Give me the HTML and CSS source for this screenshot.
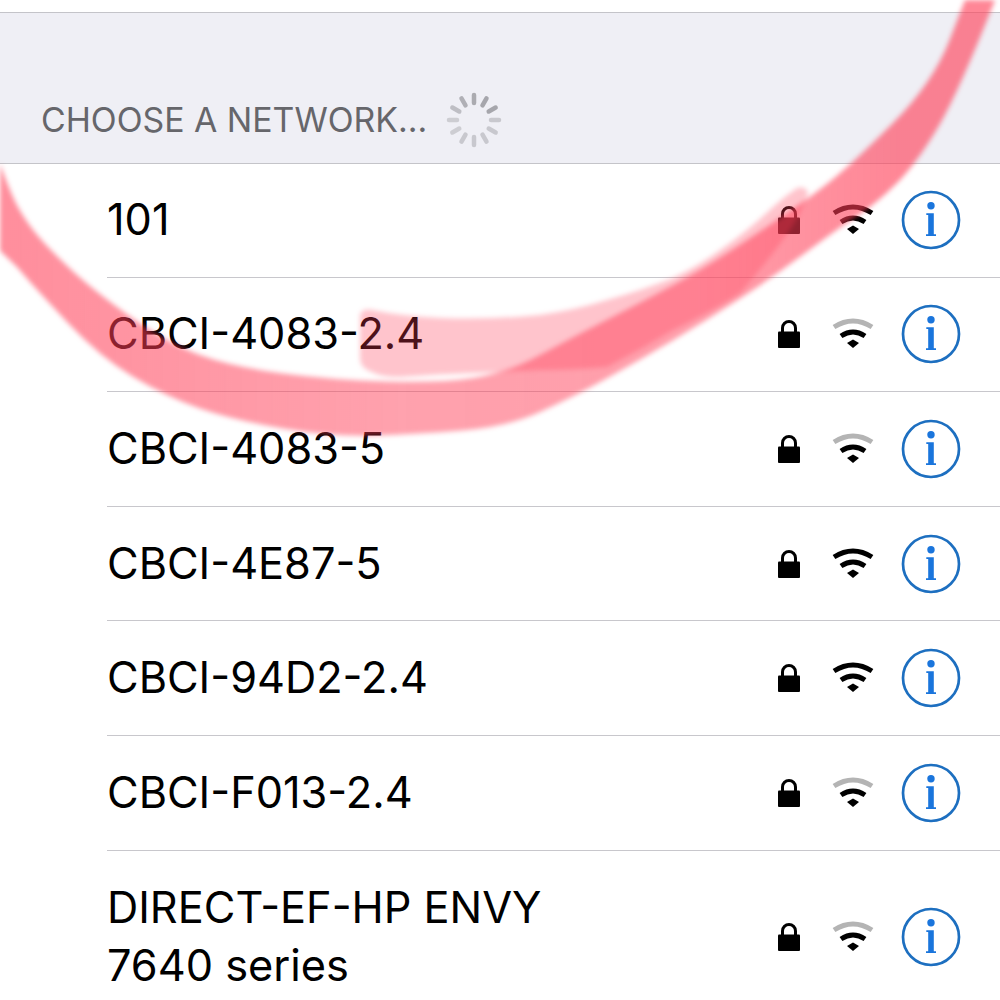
FILE: index.html
```html
<!DOCTYPE html>
<html lang="en">
<head>
<meta charset="utf-8">
<title>Wi-Fi networks</title>
<link rel="stylesheet" href="styles.css">
</head>
<body>
<svg class="defs" width="0" height="0" aria-hidden="true">
  <symbol id="lock" viewBox="0 0 24 30">
    <path class="lock-shackle" d="M5.500 14V9a6.500 6.500 0 0 1 13 0v5"/>
    <rect x="1" y="12.500" width="22" height="16.500" rx="1"/>
  </symbol>
  <symbol id="info" viewBox="0 0 60 60">
    <circle class="info-ring" cx="30" cy="30" r="28"/>
    <circle class="info-mark" cx="30" cy="15.800" r="3.700"/>
    <path class="info-mark" d="M25.300 23.300H32.800V44.300H35V46H25V44.300H27.200V25H25.300Z"/>
  </symbol>
</svg>
<main class="screen">
  <div class="top-gap"></div>
  <header class="section-head">
    <span class="section-title">CHOOSE A NETWORK...</span>
    <svg class="spinner" width="56" height="56" viewBox="-28 -28 56 56" aria-hidden="true">
      <g stroke="#8e8e93" stroke-width="4.500" stroke-linecap="round">
        <line y1="-25" y2="-17" stroke-opacity=".7"/>
        <line y1="-25" y2="-17" transform="rotate(30)" stroke-opacity=".75"/>
        <line y1="-25" y2="-17" transform="rotate(60)" stroke-opacity=".75"/>
        <line y1="-25" y2="-17" transform="rotate(90)" stroke-opacity=".4"/>
        <line y1="-25" y2="-17" transform="rotate(120)" stroke-opacity=".4"/>
        <line y1="-25" y2="-17" transform="rotate(150)" stroke-opacity=".4"/>
        <line y1="-25" y2="-17" transform="rotate(180)" stroke-opacity=".4"/>
        <line y1="-25" y2="-17" transform="rotate(210)" stroke-opacity=".4"/>
        <line y1="-25" y2="-17" transform="rotate(240)" stroke-opacity=".35"/>
        <line y1="-25" y2="-17" transform="rotate(270)" stroke-opacity=".35"/>
        <line y1="-25" y2="-17" transform="rotate(300)" stroke-opacity=".5"/>
        <line y1="-25" y2="-17" transform="rotate(330)" stroke-opacity=".65"/>
      </g>
    </svg>
  </header>
  <ul class="networks">
    <li class="network">
      <span class="network-name">101</span>
      <svg class="lock" aria-hidden="true"><use href="#lock"/></svg>
      <svg class="wifi" viewBox="0 0 44 32" aria-hidden="true"><path class="arc" d="M3 9Q22 -3 41 9"/><path class="arc" d="M10 18Q22 10 34 18"/><path class="dot" d="M16 25L22 21.500 28 25 22 30Z"/></svg>
      <svg class="info" aria-hidden="true"><use href="#info"/></svg>
    </li>
    <li class="network">
      <span class="network-name">CBCI-4083-2.4</span>
      <svg class="lock" aria-hidden="true"><use href="#lock"/></svg>
      <svg class="wifi" viewBox="0 0 44 32" aria-hidden="true"><path class="arc arc-off" d="M3 9Q22 -3 41 9"/><path class="arc" d="M10 18Q22 10 34 18"/><path class="dot" d="M16 25L22 21.500 28 25 22 30Z"/></svg>
      <svg class="info" aria-hidden="true"><use href="#info"/></svg>
    </li>
    <li class="network">
      <span class="network-name">CBCI-4083-5</span>
      <svg class="lock" aria-hidden="true"><use href="#lock"/></svg>
      <svg class="wifi" viewBox="0 0 44 32" aria-hidden="true"><path class="arc arc-off" d="M3 9Q22 -3 41 9"/><path class="arc" d="M10 18Q22 10 34 18"/><path class="dot" d="M16 25L22 21.500 28 25 22 30Z"/></svg>
      <svg class="info" aria-hidden="true"><use href="#info"/></svg>
    </li>
    <li class="network">
      <span class="network-name">CBCI-4E87-5</span>
      <svg class="lock" aria-hidden="true"><use href="#lock"/></svg>
      <svg class="wifi" viewBox="0 0 44 32" aria-hidden="true"><path class="arc" d="M3 9Q22 -3 41 9"/><path class="arc" d="M10 18Q22 10 34 18"/><path class="dot" d="M16 25L22 21.500 28 25 22 30Z"/></svg>
      <svg class="info" aria-hidden="true"><use href="#info"/></svg>
    </li>
    <li class="network">
      <span class="network-name">CBCI-94D2-2.4</span>
      <svg class="lock" aria-hidden="true"><use href="#lock"/></svg>
      <svg class="wifi" viewBox="0 0 44 32" aria-hidden="true"><path class="arc" d="M3 9Q22 -3 41 9"/><path class="arc" d="M10 18Q22 10 34 18"/><path class="dot" d="M16 25L22 21.500 28 25 22 30Z"/></svg>
      <svg class="info" aria-hidden="true"><use href="#info"/></svg>
    </li>
    <li class="network">
      <span class="network-name">CBCI-F013-2.4</span>
      <svg class="lock" aria-hidden="true"><use href="#lock"/></svg>
      <svg class="wifi" viewBox="0 0 44 32" aria-hidden="true"><path class="arc arc-off" d="M3 9Q22 -3 41 9"/><path class="arc" d="M10 18Q22 10 34 18"/><path class="dot" d="M16 25L22 21.500 28 25 22 30Z"/></svg>
      <svg class="info" aria-hidden="true"><use href="#info"/></svg>
    </li>
    <li class="network network-tall">
      <span class="network-name">DIRECT-EF-HP ENVY<br>7640 series</span>
      <svg class="lock" aria-hidden="true"><use href="#lock"/></svg>
      <svg class="wifi" viewBox="0 0 44 32" aria-hidden="true"><path class="arc arc-off" d="M3 9Q22 -3 41 9"/><path class="arc" d="M10 18Q22 10 34 18"/><path class="dot" d="M16 25L22 21.500 28 25 22 30Z"/></svg>
      <svg class="info" aria-hidden="true"><use href="#info"/></svg>
    </li>
  </ul>
  <svg class="scribble" viewBox="0 0 1000 1000" aria-hidden="true">
    <defs>
      <linearGradient id="scribble-main" gradientUnits="userSpaceOnUse" x1="0" y1="0" x2="1000" y2="0">
        <stop offset="0" stop-color="#ff3c55" stop-opacity=".58"/>
        <stop offset=".4" stop-color="#ff3c55" stop-opacity=".48"/>
        <stop offset=".7" stop-color="#ff3c55" stop-opacity=".5"/>
        <stop offset=".9" stop-color="#ff3c55" stop-opacity=".62"/>
      </linearGradient>
    </defs>
    <path fill="url(#scribble-main)" d="M967 -5L950 39Q933 83 893 123Q853 163 830 181.500Q807 200 757 233.500Q707 267 673.500 285Q640 303 606.500 320Q573 337 540 355Q507 373 473.500 378Q440 383 386.500 381.500Q333 380 283 373.500Q233 367 200 355Q167 343 130 316.500Q93 290 71.500 270Q50 250 38.500 236.500Q27 223 18.500 208Q10 193 -5 150L-5 246L17 267L27 278.500Q37 290 68.500 323.500Q100 357 133.500 377Q167 397 200 408.500Q233 420 283 428.500Q333 437 375 435.500Q417 434 462 430.500Q507 427 540 412Q573 397 606.500 378.500Q640 360 673.500 340Q707 320 740 298.500Q773 277 806.500 252Q840 227 858.500 215Q877 203 897 183Q917 163 938.500 126.500Q960 90 997 -5Z"/>
    <path class="stroke-second" d="M360 316Q361 308 372 310Q400 316 440 318Q490 320 540 315Q575 310 607 300Q640 291 673 278Q700 265 723 248Q750 229 773 207Q785 196 797 188Q806 186 808 193Q800 215 790 230Q765 265 740 293Q705 315 673 330Q640 350 607 367Q575 370 540 370Q505 372 473 373Q440 374 400 377Q380 377 372 372Q360 368 360 358Z"/>
  </svg>
</main>
</body>
</html>
```
FILE: styles.css
```css
* { box-sizing: border-box; }
html, body { margin: 0; padding: 0; background: #fff; }
.defs { position: absolute; }
.screen {
  position: relative;
  width: 1000px;
  height: 1000px;
  overflow: hidden;
  background: #fff;
  font-family: Inter, "Liberation Sans", sans-serif;
  color: #000;
}
.top-gap { height: 12px; }
.section-head {
  height: 152px;
  display: flex;
  align-items: flex-end;
  gap: 20px;
  padding: 0 0 15px 41px;
  background: #efeff5;
  border-top: 1px solid #c4c4c9;
  border-bottom: 1px solid #c4c4c9;
}
.section-title {
  font-size: 33.800px;
  line-height: 56px;
  color: #66666b;
}
.spinner { display: block; margin: 0 0 0 -1px; }
.networks { list-style: none; margin: -1px 0 0; padding: 0; }
.network {
  height: 114.600px;
  display: flex;
  align-items: center;
  margin-left: 107px;
  padding-right: 39px;
  border-bottom: 1px solid #c8c7cc;
}
.network-tall { height: 172px; border-bottom: 0; }
.network-name {
  flex: 1;
  font-size: 43.300px;
  line-height: 58px;
  padding-bottom: 2px;
}
.lock { width: 24px; height: 30px; margin-right: 30px; fill: #000; }
.lock-shackle { fill: none; stroke: #000; stroke-width: 3; }
.wifi { width: 44px; height: 32px; margin-right: 26px; }
.arc { fill: none; stroke: #000; stroke-width: 5; }
.arc-off { stroke: #b4b4b4; }
.dot { fill: #000; }
.info { width: 60px; height: 60px; }
.info-ring { fill: none; stroke: #1d6fc0; stroke-width: 2.700; }
.info-mark { fill: #1a75dc; }
.scribble {
  position: absolute;
  left: 0;
  top: 0;
  width: 1000px;
  height: 1000px;
  pointer-events: none;
  filter: blur(2.500px);
}
.stroke-second { fill: rgb(255, 60, 85); opacity: .3; }
```
